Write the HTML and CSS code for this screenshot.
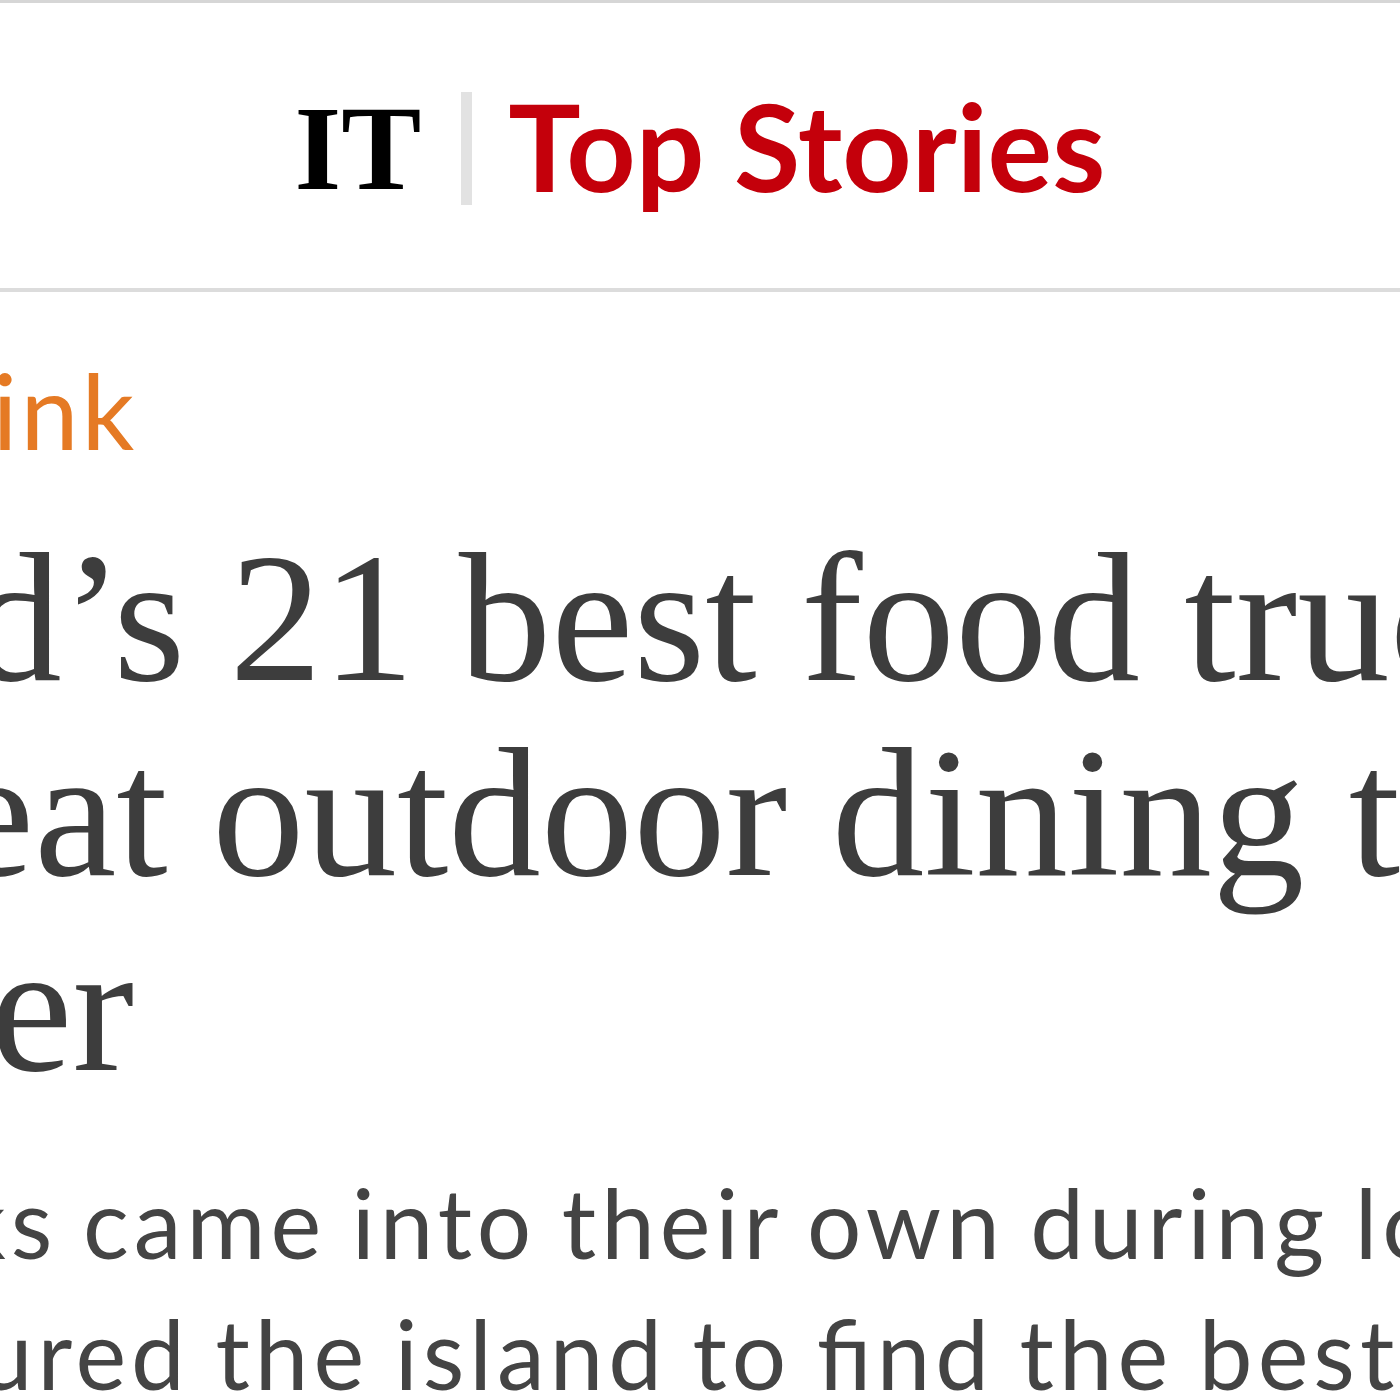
FILE: index.html
```html
<!DOCTYPE html>
<html lang="en">
<head>
  <meta charset="UTF-8">
  <title>IT Top Stories</title>
  <link rel="stylesheet" href="styles.css">
</head>
<body>

  <header class="masthead">
    <span class="logo">IT</span>
    <span class="divider"></span>
    <span class="section">Top Stories</span>
  </header>

  <main class="article">
    <div class="category">Food &amp; Drink</div>
    <h1 class="headline">
      <span class="line">Ireland’s 21 best food trucks</span>
      <span class="line">for great outdoor dining this</span>
      <span class="line">summer</span>
    </h1>
    <p class="standfirst">
      <span class="line">Food trucks came into their own during lockdown.</span>
      <span class="line">We’ve scoured the island to ﬁnd the best</span>
    </p>
  </main>

</body>
</html>
```

FILE: styles.css
```css
html, body {
  margin: 0;
  padding: 0;
  background: #fff;
  overflow: hidden;
}
body {
  width: 1400px;
  height: 1400px;
  border-top: 3px solid #d6d6d6;
  box-sizing: border-box;
}
.masthead {
  height: 289px;
  display: flex;
  align-items: center;
  justify-content: center;
  border-bottom: 4px solid #dcdcdc;
  padding-top: 6px;
  box-sizing: border-box;
}
.logo {
  font-family: "Liberation Serif", serif;
  font-weight: bold;
  font-size: 120px;
  color: #000;
}
.divider {
  width: 11px;
  height: 113px;
  background: #e2e2e2;
  margin: 0 36px 0 40px;
}
.section {
  font-family: Lato, sans-serif;
  font-weight: bold;
  font-size: 121px;
  color: #c4000b;
  margin-top: -6px;
}
.article {
  white-space: nowrap;
}
.line {
  display: block;
}
.category {
  font-family: Lato, sans-serif;
  font-size: 104px;
  letter-spacing: 3px;
  color: #e57a24;
  margin: 58px 0 0 -508px;
  line-height: 120px;
}
.headline {
  font-family: "Liberation Serif", serif;
  font-weight: normal;
  font-size: 185px;
  line-height: 195px;
  word-spacing: -2px;
  color: #3d3d3d;
  margin: 50px 0 0 -462px;
}
.standfirst {
  font-family: Lato, sans-serif;
  font-size: 96px;
  letter-spacing: 5px;
  word-spacing: -4px;
  line-height: 131px;
  color: #444;
  margin: 51px 0 0 -490px;
}
```
